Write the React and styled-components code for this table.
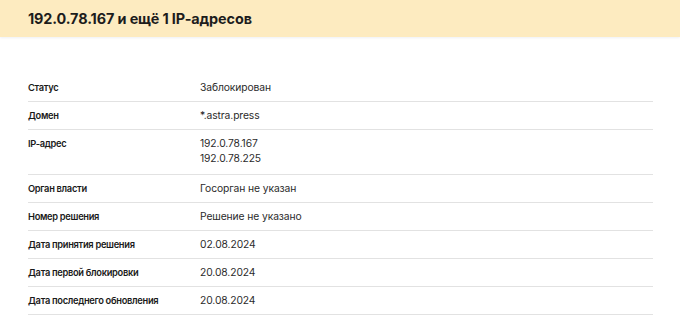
import styled, { createGlobalStyle } from 'styled-components';

const GlobalStyle = createGlobalStyle`
	html, body {
		margin: 0;
		padding: 0;
		background: #fff;
		font-family: Inter, "Noto Sans", sans-serif;
		color: #1b1b1b;
	}
`;

const rows = [
	{ label: 'Статус', values: ['Заблокирован'] },
	{ label: 'Домен', values: ['*.astra.press'] },
	{ label: 'IP-адрес', values: ['192.0.78.167', '192.0.78.225'] },
	{ label: 'Орган власти', values: ['Госорган не указан'] },
	{ label: 'Номер решения', values: ['Решение не указано'] },
	{ label: 'Дата принятия решения', values: ['02.08.2024'] },
	{ label: 'Дата первой блокировки', values: ['20.08.2024'] },
	{ label: 'Дата последнего обновления', values: ['20.08.2024'] },
];

export default function App() {
	return (
		<>
			<GlobalStyle />
			<Header>
				<Title>192.0.78.167 и ещё 1 IP-адресов</Title>
			</Header>
			<Body>
				<Table>
					{rows.map((row) => (
						<Row key={row.label} $multi={row.values.length > 1}>
							<Label>{row.label}</Label>
							<Values>
								{row.values.map((v) => (
									<Value key={v}>{v}</Value>
								))}
							</Values>
						</Row>
					))}
				</Table>
			</Body>
		</>
	);
}

const Header = styled.header`
	height: 37px;
	background: #fdebc0;
	display: flex;
	align-items: center;
	padding: 0 28px;
	box-shadow: 0 1px 2px rgba(120, 140, 170, 0.12);
`;

const Title = styled.h1`
	margin: 0;
	font-size: 14.4px;
	font-weight: 700;
	letter-spacing: -0.1px;
	color: #1c1c1c;
`;

const Body = styled.main`
	padding: 37px 27px 0 28px;
`;

const Table = styled.div`
	display: flex;
	flex-direction: column;
`;

const Row = styled.div`
	display: grid;
	grid-template-columns: 172px 1fr;
	align-items: start;
	padding: 6px 0 ${(p) => (p.$multi ? '8px' : '6px')};
	border-bottom: 1px solid #e2e2e2;
	line-height: 15px;
`;

const Label = styled.span`
	font-size: 9.3px;
	font-weight: 600;
	letter-spacing: -0.3px;
	color: #1a1a1a;
`;

const Values = styled.div`
	display: flex;
	flex-direction: column;
`;

const Value = styled.span`
	font-size: 10.3px;
	font-weight: 400;
	letter-spacing: -0.1px;
	color: #2b2b2b;
`;
